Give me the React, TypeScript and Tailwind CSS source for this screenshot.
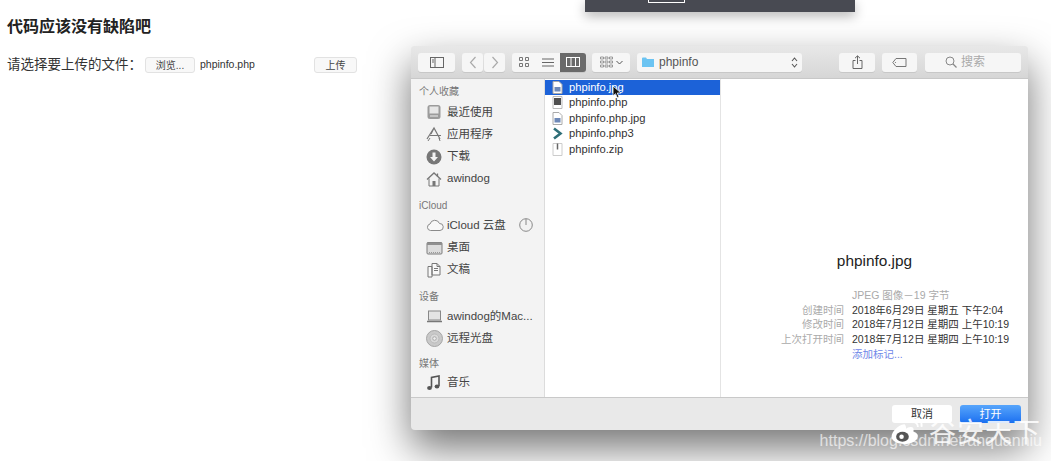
import { ReactNode } from 'react';

const font = 'font-["Liberation_Sans","Noto_Sans_CJK_SC",sans-serif]';

function Svg({ w = 16, h = 16, children }: { w?: number; h?: number; children: ReactNode }) {
  return (
    <svg width={w} height={h} viewBox={`0 0 ${w} ${h}`} fill="none" className="shrink-0">
      {children}
    </svg>
  );
}

const g = '#777';

const sideIcons: Record<string, ReactNode> = {
  recent: (
    <Svg>
      <rect x="1.500" y="1" width="13" height="14" rx="2.500" fill="#9b9b9b" />
      <rect x="3.500" y="2.500" width="9" height="7" fill="#e6e6e6" />
      <path d="M4 12h8" stroke="#eee" />
    </Svg>
  ),
  apps: (
    <Svg>
      <path d="M1 13 8 2l6 11M4 9.500h11M8 2l-3 6" stroke={g} strokeWidth="1.200" />
      <path d="M2 15l2-3M13 12l1 3" stroke={g} />
    </Svg>
  ),
  down: (
    <Svg>
      <circle cx="8" cy="8" r="7.500" fill="#777" />
      <path d="M6.500 3.500h3V8H12l-4 4.500L4 8h2.500z" fill="#f3f3f3" />
    </Svg>
  ),
  home: (
    <Svg>
      <path d="M1 8.500 8 2l7 6.500" stroke={g} strokeWidth="1.300" />
      <path d="M3 7.500V15h10V7.500" stroke={g} />
      <rect x="6.500" y="10" width="3" height="5" fill={g} />
      <path d="M11.500 2.500v3" stroke={g} strokeWidth="1.300" />
    </Svg>
  ),
  cloud: (
    <Svg w={18}>
      <path
        d="M4.500 13.500a3.300 3.300 0 0 1-.5-6.500 5 5 0 0 1 9.500-.5 3.500 3.500 0 0 1 .5 7z"
        stroke="#8a8a8a"
        fill="#f8f8f8"
      />
    </Svg>
  ),
  desk: (
    <Svg w={17}>
      <rect x="1" y="2.500" width="15" height="11.500" rx="1" fill="#dcdcdc" stroke="#7d7d7d" />
      <rect x="1" y="2.500" width="15" height="2.500" fill="#8f8f8f" />
      <path d="M3 12.500h11" stroke="#999" strokeDasharray="1 1" />
    </Svg>
  ),
  docs: (
    <Svg>
      <path d="M2 4.500h4V15H2zM6 1.500h5l3 3V13H6z" stroke={g} fill="#f8f8f8" />
      <path d="M11 1.500v3h3M8 6.500h4M8 8.500h4" stroke={g} />
    </Svg>
  ),
  laptop: (
    <Svg w={17}>
      <rect x="2.500" y="3" width="12" height="9" fill="#e4e4e4" stroke="#888" />
      <path d="M1 13.500h15" stroke="#777" strokeWidth="1.500" />
    </Svg>
  ),
  disc: (
    <Svg w={17} h={17}>
      <circle cx="8.500" cy="8.500" r="8" fill="#c9c9c9" stroke="#a5a5a5" />
      <circle cx="8.500" cy="8.500" r="4.500" fill="#d9d9d9" stroke="#bbb" />
      <circle cx="8.500" cy="8.500" r="1.800" fill="#eee" stroke="#aaa" />
    </Svg>
  ),
  music: (
    <Svg>
      <path d="M5.500 12.500V2.500l7.500-1.500v10" stroke="#555" strokeWidth="1.600" />
      <ellipse cx="3.500" cy="13" rx="2.400" ry="2" fill="#555" />
      <ellipse cx="11" cy="11.500" rx="2.400" ry="2" fill="#555" />
    </Svg>
  ),
};

const sidebar: { title: string; spacing: string; items: { icon: string; label: string; extra?: boolean }[] }[] = [
  {
    title: '个人收藏',
    spacing: 'mt-[7px] mb-[3px]',
    items: [
      { icon: 'recent', label: '最近使用' },
      { icon: 'apps', label: '应用程序' },
      { icon: 'down', label: '下载' },
      { icon: 'home', label: 'awindog' },
    ],
  },
  {
    title: 'iCloud',
    spacing: 'mt-[10px] mb-[2px]',
    items: [
      { icon: 'cloud', label: 'iCloud 云盘', extra: true },
      { icon: 'desk', label: '桌面' },
      { icon: 'docs', label: '文稿' },
    ],
  },
  {
    title: '设备',
    spacing: 'mt-[10px] mb-[2px]',
    items: [
      { icon: 'laptop', label: 'awindog的Mac...' },
      { icon: 'disc', label: '远程光盘' },
    ],
  },
  {
    title: '媒体',
    spacing: 'mt-[8px] mb-[2px]',
    items: [{ icon: 'music', label: '音乐' }],
  },
];

const fileIcons: Record<string, ReactNode> = {
  jpg: (
    <Svg w={11} h={13}>
      <path d="M1 .5h6l3 3v9H1z" fill="#fff" stroke="#aaa" />
      <rect x="2.500" y="6" width="6" height="4.500" fill="#6e89b8" />
    </Svg>
  ),
  php: (
    <Svg w={11} h={13}>
      <path d="M1 .5h9v12H1z" fill="#fff" stroke="#bbb" />
      <rect x="2" y="2" width="7" height="7" fill="#4f4f4f" />
    </Svg>
  ),
  php3: (
    <Svg w={11} h={13}>
      <path d="M2 1.500 8.500 6.500 2 11.500" stroke="#2f6f78" strokeWidth="2.600" />
    </Svg>
  ),
  zip: (
    <Svg w={11} h={13}>
      <path d="M1 .5h9v12H1z" fill="#fff" stroke="#ccc" />
      <path d="M5.500 .5v6" stroke="#666" strokeWidth="1.500" />
    </Svg>
  ),
};

const files = [
  { name: 'phpinfo.jpg', icon: 'jpg', active: true },
  { name: 'phpinfo.php', icon: 'php' },
  { name: 'phpinfo.php.jpg', icon: 'jpg' },
  { name: 'phpinfo.php3', icon: 'php3' },
  { name: 'phpinfo.zip', icon: 'zip' },
];

const meta = [
  { label: '创建时间', value: '2018年6月29日 星期五 下午2:04' },
  { label: '修改时间', value: '2018年7月12日 星期四 上午10:19' },
  { label: '上次打开时间', value: '2018年7月12日 星期四 上午10:19' },
];

function ToolButton({ className, children }: { className: string; children: ReactNode }) {
  return (
    <div
      className={`h-[19px] flex items-center justify-center rounded-[3px] bg-[#f6f6f6] shadow-[0_1px_0_rgba(0,0,0,0.08)] ${className}`}
    >
      {children}
    </div>
  );
}

function Toolbar() {
  return (
    <div className="h-[33px] flex items-center pl-[7px] bg-gradient-to-b from-[#e8e8e8] to-[#d6d6d6] border-b border-[#c8c8c8] rounded-t-[4px]">
      <ToolButton className="w-[37px] mr-[7px]">
        <Svg w={14} h={11}>
          <rect x=".5" y=".5" width="13" height="10" stroke="#666" />
          <path d="M5 .5v10M2 3h2M2 5h2" stroke="#666" />
        </Svg>
      </ToolButton>
      <ToolButton className="w-[21px] mr-px">
        <Svg w={8} h={13}>
          <path d="M6.500 1 1.500 6.500l5 5.500" stroke="#aaa" strokeWidth="1.200" />
        </Svg>
      </ToolButton>
      <ToolButton className="w-[21px] mr-[7px]">
        <Svg w={8} h={13}>
          <path d="M1.500 1l5 5.500-5 5.500" stroke="#aaa" strokeWidth="1.200" />
        </Svg>
      </ToolButton>
      <ToolButton className="w-[24px] rounded-r-none">
        <Svg w={10} h={10}>
          <path d="M.5.500h3v3h-3zM6.500.500h3v3h-3zM.5 6.500h3v3h-3zM6.500 6.500h3v3h-3z" stroke="#777" />
        </Svg>
      </ToolButton>
      <ToolButton className="w-[24px] rounded-none">
        <Svg w={12} h={9}>
          <path d="M0 1h12M0 4.500h12M0 8h12" stroke="#666" />
        </Svg>
      </ToolButton>
      <ToolButton className="w-[26px] rounded-l-none !bg-[#6a6a6a] mr-[6px]">
        <Svg w={14} h={10}>
          <rect x=".5" y=".5" width="13" height="9" stroke="#fff" />
          <path d="M5 .5v9M9.500 .5v9" stroke="#fff" />
        </Svg>
      </ToolButton>
      <ToolButton className="w-[38px] gap-[3px] mr-[7px]">
        <Svg w={13} h={12}>
          <path
            d="M.5 1h3v2h-3zM5 1h3v2H5zM9.500 1h3v2h-3zM.5 5h3v2h-3zM5 5h3v2H5zM9.500 5h3v2h-3zM.5 9h3v2h-3zM5 9h3v2H5zM9.500 9h3v2h-3z"
            stroke="#777"
            strokeWidth=".7"
          />
        </Svg>
        <Svg w={7} h={5}>
          <path d="M.5 1l3 3 3-3" stroke="#555" />
        </Svg>
      </ToolButton>
      <ToolButton className="w-[165px] justify-start pl-[5px] pr-[4px] mr-[37px]">
        <Svg w={12} h={10}>
          <path d="M0 1.500A1 1 0 0 1 1 .5h3l1 1.500h7v8H0z" fill="#6cc4f2" />
        </Svg>
        <span className="ml-[5px] text-[12px] text-[#555]">phpinfo</span>
        <span className="ml-auto">
          <Svg w={7} h={11}>
            <path d="M1 4l2.500-3L6 4M1 7l2.500 3L6 7" stroke="#555" strokeWidth="1.100" />
          </Svg>
        </span>
      </ToolButton>
      <ToolButton className="w-[36px] mr-[7px]">
        <Svg w={11} h={14}>
          <path d="M5.500 9V1M3 3.200 5.500 .8 8 3.200M3.500 5.500H1V13.500h9V5.500H7.500" stroke="#666" />
        </Svg>
      </ToolButton>
      <ToolButton className="w-[35px] mr-[8px]">
        <Svg w={15} h={9}>
          <path d="M4 .5h10v8H4L.8 4.500z" stroke="#777" />
          <circle cx="3.500" cy="4.500" r=".6" fill="#777" />
        </Svg>
      </ToolButton>
      <ToolButton className="w-[96px] gap-[4px] pr-[16px] text-[12px] text-[#aaa]">
        <Svg w={12} h={12}>
          <circle cx="5" cy="5" r="4" stroke="#888" />
          <path d="M8 8l3.500 3.500" stroke="#888" strokeWidth="1.200" />
        </Svg>
        搜索
      </ToolButton>
    </div>
  );
}

function Sidebar() {
  return (
    <div className="w-[134px] shrink-0 bg-[#f3f3f3] border-r border-[#dcdcdc] pl-[8px] pr-[8px] text-[11.500px] text-[#444]">
      {sidebar.map((section) => (
        <div key={section.title}>
          <div className={`h-[12px] leading-[12px] text-[10px] text-[#777] ${section.spacing}`}>{section.title}</div>
          {section.items.map((item) => (
            <div key={item.label} className="h-[22.300px] flex items-center">
              <span className="w-[28px] pl-[7px] shrink-0 flex">{sideIcons[item.icon]}</span>
              <span className="whitespace-nowrap">{item.label}</span>
              {item.extra && (
                <span className="ml-auto mr-[3px]">
                  <Svg w={14} h={14}>
                    <circle cx="7" cy="7" r="6.300" stroke="#888" />
                    <path d="M7 1v6" stroke="#888" />
                  </Svg>
                </span>
              )}
            </div>
          ))}
        </div>
      ))}
    </div>
  );
}

function FileColumn() {
  return (
    <div className="w-[176px] shrink-0 bg-white border-r border-[#e4e4e4] pt-[0.5px] text-[11.200px] text-[#333]">
      {files.map((f) => (
        <div
          key={f.name}
          className={`h-[15.500px] flex items-center pl-[7px] ${f.active ? 'bg-[#1c62d8] text-white' : ''}`}
        >
          <span className="w-[17px] flex shrink-0">{fileIcons[f.icon]}</span>
          {f.name}
        </div>
      ))}
    </div>
  );
}

function Preview() {
  return (
    <div className="flex-1 bg-white flex flex-col items-center pt-[172px]">
      <div className="text-[15.400px] leading-[20px] text-[#222]">phpinfo.jpg</div>
      <div className="mt-[17px] self-stretch grid grid-cols-[123px_1fr] gap-x-[8px] text-[10.500px] leading-[14.600px]">
        <span />
        <span className="text-[#aaa]">JPEG 图像－19 字节</span>
        {meta.map((m) => (
          <div key={m.label} className="contents">
            <span className="text-right text-[#aaa] whitespace-nowrap">{m.label}</span>
            <span className="text-[#333] whitespace-nowrap">{m.value}</span>
          </div>
        ))}
        <span />
        <span className="text-[#6f86e8] mt-px">添加标记...</span>
      </div>
    </div>
  );
}

function FileDialog() {
  return (
    <div
      className={`absolute left-[411px] top-[46px] w-[617px] h-[384px] flex flex-col rounded-[4px] bg-[#e9e9e9] shadow-[0_18px_40px_rgba(0,0,0,0.55)] ${font}`}
    >
      <Toolbar />
      <div className="h-[319px] flex border-b border-[#c9c9c9]">
        <Sidebar />
        <FileColumn />
        <Preview />
      </div>
      <div className="flex-1 flex items-start justify-end gap-[8px] pt-[7px] pr-[7px]">
        <div className="w-[60px] h-[18px] rounded-[3px] bg-white text-[11px] leading-[18px] text-center text-[#333]">取消</div>
        <div className="w-[61px] h-[18px] rounded-[3px] bg-gradient-to-b from-[#57a5fb] to-[#1a6ff0] text-[11px] leading-[18px] text-center text-white">
          打开
        </div>
      </div>
    </div>
  );
}

function Watermark() {
  return (
    <div className={`absolute right-[9px] bottom-[10px] flex flex-col items-end ${font}`}>
      <div className="absolute right-[117px] bottom-[6px]">
        <svg width="36" height="29" viewBox="0 0 36 32" fill="none">
          <path
            d="M15 9C8 10 1 17 1 23c0 5 7 8 14 8 8 0 15-4 15-9 0-3-3-4-5-5 1-3 0-5-3-5-2 0-4 1-5 2 0-3-1-5-2-5z"
            fill="#fff"
          />
          <ellipse cx="13" cy="23" rx="7" ry="5.500" fill="#555" />
          <circle cx="12" cy="23" r="2.500" fill="#fff" />
          <path d="M24 7c3-1 6 1 6 5M25 2c6-1 10 4 9 10" stroke="#fff" strokeWidth="2" />
        </svg>
      </div>
      <div className="text-[27px] leading-[24px] tracking-[1px] text-white/85 mr-[1px]">谷安天下</div>
      <div className="-mt-[14px] text-[16px] leading-[20px] text-white/65">https://blog.csdn.net/anquanniu</div>
    </div>
  );
}

export default function App() {
  return (
    <div className={`relative w-[1051px] h-[461px] overflow-hidden bg-white text-[#222] ${font}`}>
      <div className="pl-[7px] pt-[18px]">
        <h1 className="text-[16px] leading-[18px] font-bold">代码应该没有缺陷吧</h1>
        <div className="mt-[21px] flex items-center h-[16px]">
          <span className="w-[138px] shrink-0 text-[13.500px] text-[#333] whitespace-nowrap">请选择要上传的文件：</span>
          <button className="w-[50px] h-[16px] rounded-[3px] bg-[#f8f8f8] border border-[#e2e2e2] text-[10px] text-[#444]">浏览...</button>
          <span className="w-[119px] pl-[5px] shrink-0 text-[10.500px] text-[#333]">phpinfo.php</span>
          <button className="w-[43px] h-[16px] rounded-[3px] bg-[#f8f8f8] border border-[#e2e2e2] text-[10px] text-[#444]">上传</button>
        </div>
      </div>

      <div className="absolute left-[585px] top-0 w-[270px] h-[12px] bg-[#484a52] shadow-[0_4px_12px_rgba(0,0,0,0.3)]">
        <div className="ml-[63px] w-[37px] h-[3px] border border-t-0 border-white rounded-b-[1px]" />
      </div>

      <FileDialog />

      {/* mouse pointer over the selected row */}
      <div className="absolute left-[612px] top-[85px]">
        <svg width="10" height="14" viewBox="0 0 10 14">
          <path d="M1 1v10l2.500-2.300 1.700 4 1.800-.8-1.700-3.900H9z" fill="#111" stroke="#fff" strokeWidth=".8" />
        </svg>
      </div>

      <Watermark />
    </div>
  );
}
